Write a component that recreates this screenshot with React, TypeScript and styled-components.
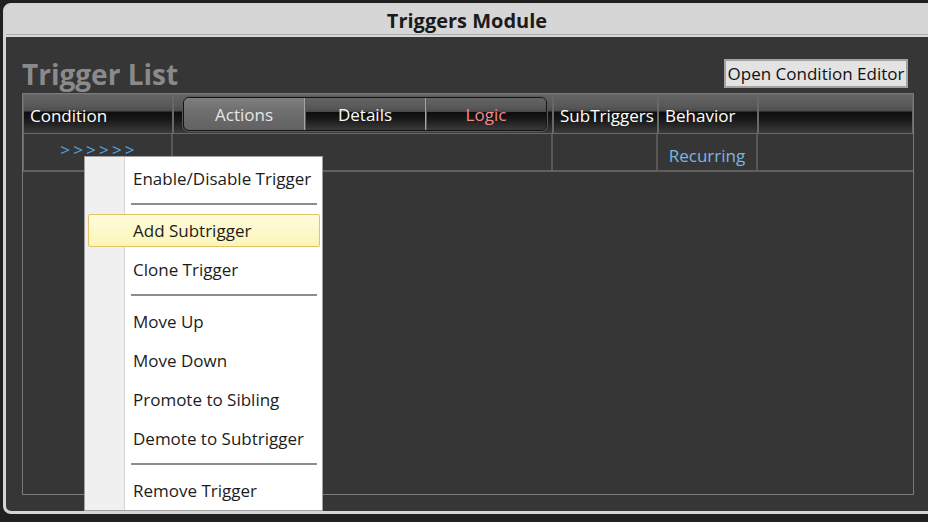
import React from "react"
import styled, { createGlobalStyle } from "styled-components"

const GlobalStyle = createGlobalStyle`
  html, body {
    margin: 0;
    padding: 0;
    background: #202020;
    overflow: hidden;
  }
  body {
    font-family: "Open Sans", "Noto Sans", sans-serif;
  }
  * {
    box-sizing: border-box;
  }
`

const columns = "150px 380px 105px 100px 1fr"

const headerGloss = `linear-gradient(
  to bottom,
  #646464 0%,
  #585858 30%,
  #4c4c4c 42%,
  #0d0d0d 45%,
  #161616 62%,
  #2c2c2c 85%,
  #3b3b3b 100%
)`

type MenuEntry = { label?: string; hover?: boolean; separator?: boolean }

const menu: MenuEntry[] = [
  { label: "Enable/Disable Trigger" },
  { separator: true },
  { label: "Add Subtrigger", hover: true },
  { label: "Clone Trigger" },
  { separator: true },
  { label: "Move Up" },
  { label: "Move Down" },
  { label: "Promote to Sibling" },
  { label: "Demote to Subtrigger" },
  { separator: true },
  { label: "Remove Trigger" },
]

export default function App() {
  return (
    <Page>
      <GlobalStyle />
      <Window>
        <TitleBar>Triggers Module</TitleBar>
        <Content>
          <ListHeader>
            <ListTitle>Trigger List</ListTitle>
            <EditorButton>Open Condition Editor</EditorButton>
          </ListHeader>
          <Table>
            <HeaderRow>
              <HeaderCell>Condition</HeaderCell>
              <TabCell>
                <TabGroup>
                  <TabSegment $active $color="#e6e6e6">Actions</TabSegment>
                  <TabSegment $color="#fafafa">Details</TabSegment>
                  <TabSegment $color="#f08a8a">Logic</TabSegment>
                </TabGroup>
              </TabCell>
              <HeaderCell>SubTriggers</HeaderCell>
              <HeaderCell>Behavior</HeaderCell>
              <HeaderCell />
            </HeaderRow>
            <DataRow>
              <DataCell>
                <ConditionMarks>&gt;&gt;&gt;&gt;&gt;&gt;</ConditionMarks>
              </DataCell>
              <DataCell />
              <DataCell />
              <DataCell>
                <BehaviorText>Recurring</BehaviorText>
              </DataCell>
              <DataCell />
            </DataRow>
          </Table>
        </Content>
      </Window>

      <ContextMenu>
        {menu.map((entry, i) =>
          entry.separator ? (
            <MenuSeparator key={i} />
          ) : (
            <MenuItem key={i} $hover={entry.hover}>
              {entry.label}
            </MenuItem>
          )
        )}
      </ContextMenu>
    </Page>
  )
}

const Page = styled.div`
  position: relative;
  width: 928px;
  height: 522px;
  padding: 3px 0 0 3px;
`

const Window = styled.div`
  width: 928px;
  height: 511px;
  display: flex;
  flex-direction: column;
  border: 3px solid #d4d4d4;
  border-radius: 8px 0 0 8px;
  background: #d4d4d4;
  overflow: hidden;
`

const TitleBar = styled.div`
  height: 29px;
  display: flex;
  align-items: center;
  justify-content: center;
  padding-top: 1px;
  background: #d6d6d6;
  border-bottom: 1px solid #a9a9a9;
  color: #1b1b1b;
  font-size: 20px;
  font-weight: 700;
`

const Content = styled.div`
  flex: 1;
  display: flex;
  flex-direction: column;
  padding: 22px 0 16px 16px;
  background: #363636;
  border-top: 2px solid #d8d8d8;
`

const ListHeader = styled.div`
  width: 892px;
  height: 29px;
  display: flex;
  align-items: flex-end;
  justify-content: space-between;
`

const ListTitle = styled.h2`
  margin: 0;
  font-size: 28px;
  line-height: 28px;
  font-weight: 700;
  color: #8a8a8a;
`

const EditorButton = styled.button`
  width: 184px;
  height: 29px;
  margin-right: 6px;
  padding: 0;
  display: flex;
  align-items: center;
  justify-content: center;
  font-family: inherit;
  font-size: 17px;
  color: #111;
  background: #e3e3e3;
  border: 2px solid #a3a3a3;
  border-radius: 0;
  white-space: nowrap;
`

const Table = styled.div`
  flex: 1;
  width: 892px;
  margin-top: 5px;
  display: flex;
  flex-direction: column;
  border: 1px solid #7a7a7a;
  background: #363636;
`

const HeaderRow = styled.div`
  height: 40px;
  display: grid;
  grid-template-columns: ${columns};
`

const HeaderCell = styled.div`
  display: flex;
  align-items: center;
  padding: 2px 0 0 6px;
  border: 1px solid #686868;
  background: ${headerGloss};
  color: #fff;
  font-size: 17px;
  white-space: nowrap;
`

const TabCell = styled(HeaderCell)`
  align-items: stretch;
  padding: 2px 5px 2px 9px;
`

const TabGroup = styled.div`
  flex: 1;
  display: flex;
  border: 1px solid #151515;
  border-radius: 6px;
  overflow: hidden;
  box-shadow: 0 0 0 1px #595959;
`

const TabSegment = styled.div<{ $active?: boolean; $color: string }>`
  flex: 1;
  display: flex;
  align-items: center;
  justify-content: center;
  padding-top: 1px;
  font-size: 17px;
  color: ${(p) => p.$color};
  background: ${(p) =>
    p.$active
      ? "linear-gradient(to bottom, #7e7e7e 0%, #6c6c6c 50%, #626262 100%)"
      : headerGloss};

  & + & {
    border-left: 1px solid #a4a4a4;
    box-shadow: inset 1px 0 0 #5c5c5c;
  }
`

const DataRow = styled.div`
  height: 38px;
  display: grid;
  grid-template-columns: ${columns};
  border-bottom: 2px solid #606060;
`

const DataCell = styled.div`
  display: flex;
  justify-content: center;
  align-items: flex-start;
  border-right: 2px solid #585858;

  &:first-child {
    border-left: 1px solid #6a6a6a;
  }
  &:last-child {
    border-right: none;
  }
`

const ConditionMarks = styled.span`
  margin-top: 4px;
  padding-left: 3px;
  font-size: 17px;
  letter-spacing: 3.2px;
  color: #52a8e6;
`

const BehaviorText = styled.span`
  margin-top: 10px;
  font-size: 17px;
  color: #7ab6e2;
`

const ContextMenu = styled.div`
  position: absolute;
  left: 84px;
  top: 156px;
  z-index: 10;
  width: 239px;
  display: flex;
  flex-direction: column;
  padding-top: 2px;
  border: 1px solid #a0a0a0;
  background: linear-gradient(
    to right,
    #f0f0f0 0 39px,
    #d6d6d6 39px 40px,
    #ffffff 40px
  );
`

const MenuItem = styled.div<{ $hover?: boolean }>`
  height: 33px;
  margin: 3px 2px 3px 3px;
  padding-left: 44px;
  display: flex;
  align-items: center;
  font-size: 17px;
  color: #1c1c1c;
  white-space: nowrap;
  border: 1px solid ${(p) => (p.$hover ? "#e5c365" : "transparent")};
  border-radius: 2px;
  background: ${(p) =>
    p.$hover ? "linear-gradient(to bottom, #fefcdc, #fcf5b8)" : "transparent"};
`

const MenuSeparator = styled.div`
  height: 2px;
  margin: 5px 5px 6px 46px;
  background: #8d8d8d;
`
